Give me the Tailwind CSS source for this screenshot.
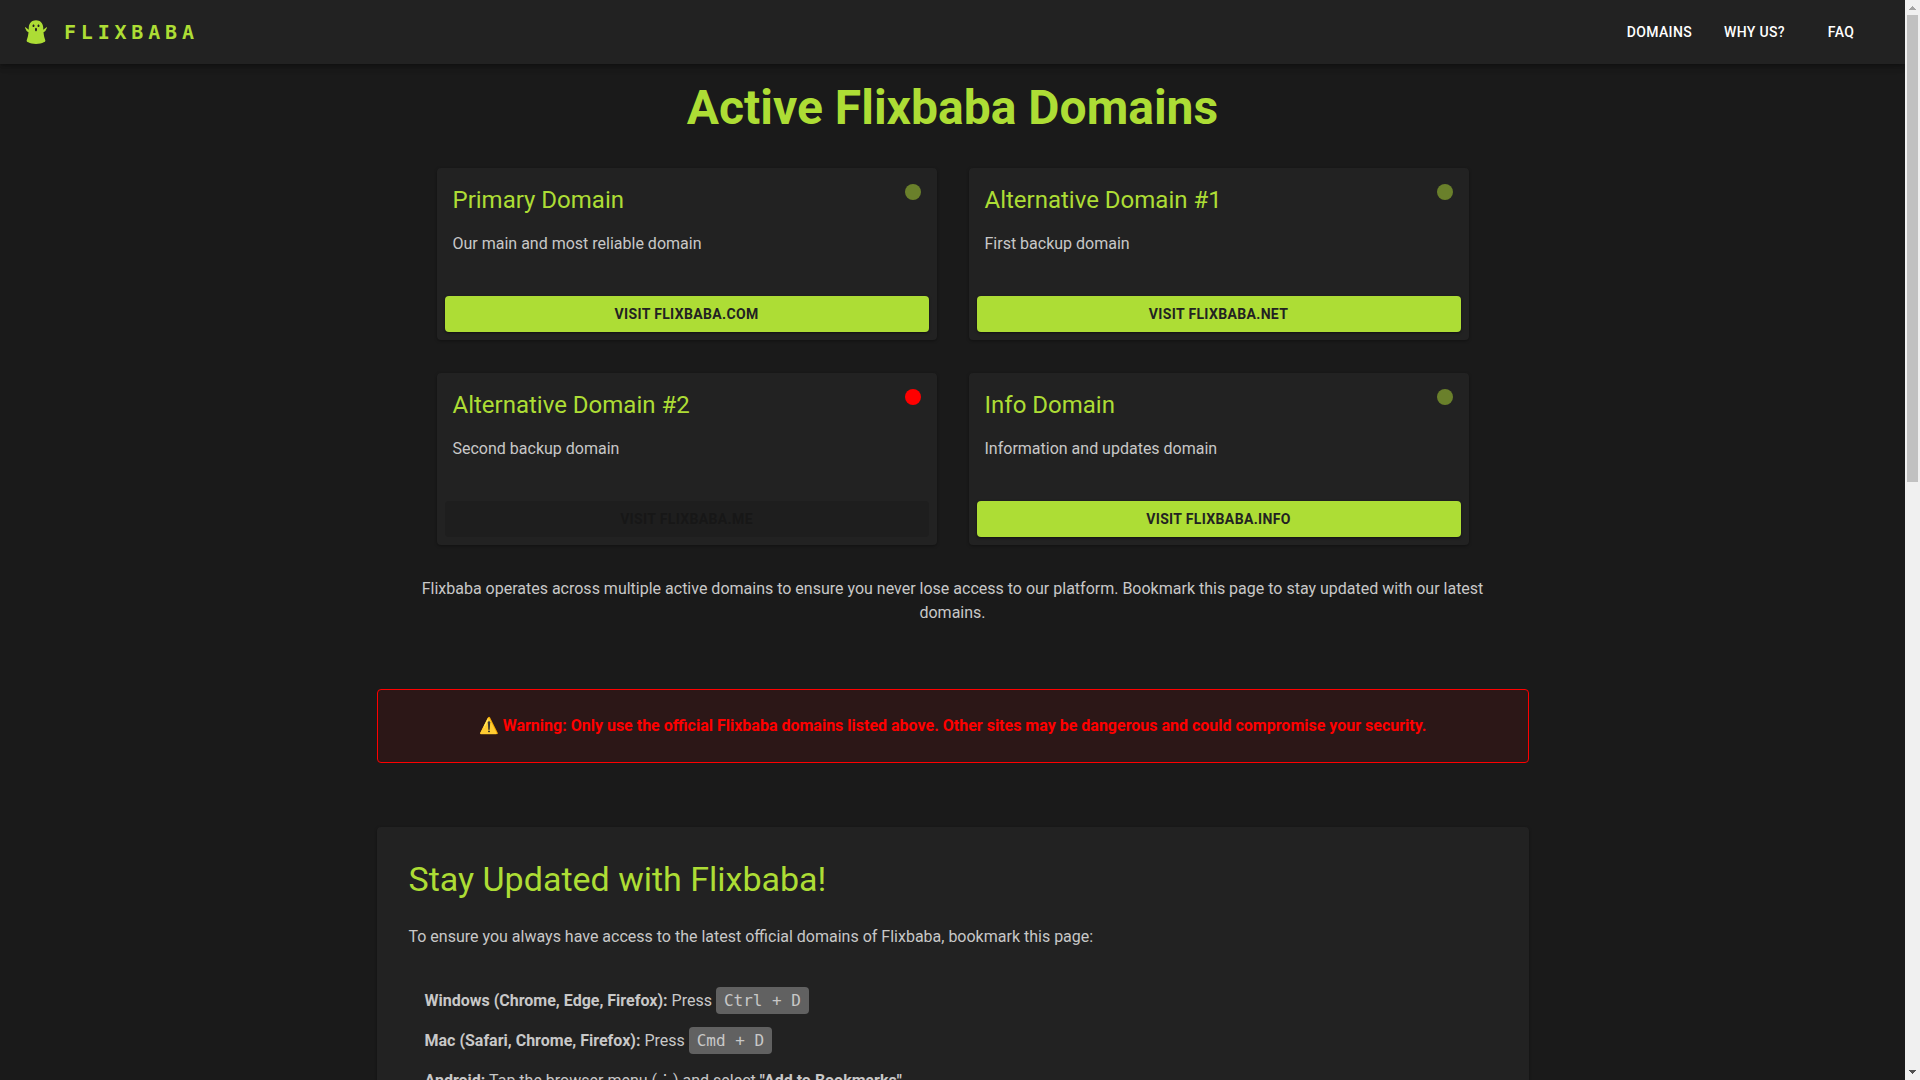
<!DOCTYPE html>
<html lang="en">
<head>
  <meta charset="UTF-8" />
  <meta name="viewport" content="width=device-width, initial-scale=1.0" />
  <title>Flixbaba - Active Domains</title>
  <script src="https://cdn.jsdelivr.net/npm/@tailwindcss/browser@4"></script>
</head>
<body class="flex h-screen overflow-hidden bg-[#1a1a1a] font-['Roboto',sans-serif] text-base text-[#c8c8c8]">
  <div class="flex h-screen min-w-0 flex-1 flex-col overflow-hidden">
    <!-- Top bar -->
    <header class="z-10 flex h-16 shrink-0 items-center justify-between bg-[#222222] px-6 shadow-[0_2px_4px_-1px_rgba(0,0,0,0.2),0_4px_5px_rgba(0,0,0,0.14),0_1px_10px_rgba(0,0,0,0.12)]">
      <a href="#" class="flex items-center gap-4 text-[#addd35]">
        <svg class="h-6 w-6" viewBox="0 0 24 24" fill="currentColor" aria-hidden="true">
          <path fill-rule="evenodd" d="M12 0.2C7.9 0.2 5 3 4.8 7.2L4.7 9.8L1.9 7.5C1.4 7.1 0.8 7.6 1.1 8.1L1.9 9.5C2.3 10.8 3.4 11.9 4.5 12.3C4.3 15 3.6 18 2.7 20.2C2.4 21 3 21.7 4.3 22.3C6 23.3 9 24 12 24C15 24 18 23.3 19.7 22.3C21 21.7 21.6 21 21.3 20.2C20.4 18 19.7 15 19.5 12.3C20.6 11.9 21.7 10.8 22.1 9.5L22.9 8.1C23.2 7.6 22.6 7.1 22.1 7.5L19.3 9.8L19.2 7.2C19 3 16.1 0.2 12 0.2ZM9.5 4.5C10.1 4.5 10.5 5.1 10.5 5.8C10.5 6.5 10.1 7.1 9.5 7.1C8.9 7.1 8.5 6.5 8.5 5.8C8.5 5.1 8.9 4.5 9.5 4.5ZM14.5 4.5C15.1 4.5 15.5 5.1 15.5 5.8C15.5 6.5 15.1 7.1 14.5 7.1C13.9 7.1 13.5 6.5 13.5 5.8C13.5 5.1 13.9 4.5 14.5 4.5ZM12 7.8C12.6 7.8 13 8.5 13 9.5C13 10.5 12.6 11.3 12 11.3C11.4 11.3 11 10.5 11 9.5C11 8.5 11.4 7.8 12 7.8Z" />
        </svg>
        <span class="font-['DejaVu_Sans_Mono',monospace] text-xl font-bold tracking-[0.3rem]">FLIXBABA</span>
      </a>
      <nav class="mr-2 flex gap-4 text-sm font-medium tracking-wide text-white">
        <a href="#domains" class="min-w-16 rounded px-2 py-1.5 text-center hover:bg-white/10">DOMAINS</a>
        <a href="#why" class="min-w-16 rounded px-2 py-1.5 text-center hover:bg-white/10">WHY US?</a>
        <a href="#faq" class="min-w-16 rounded px-2 py-1.5 text-center hover:bg-white/10">FAQ</a>
      </nav>
    </header>

    <main class="mx-auto w-full max-w-6xl pt-4">
      <!-- Domains -->
      <section id="domains">
        <h1 class="mb-8 text-center text-5xl/[56px] font-bold text-[#addd35]">Active Flixbaba Domains</h1>
        <div class="grid grid-cols-2 gap-x-8 gap-y-[33px] px-[60px]">
          <article class="rounded bg-[#222222] shadow-[0_1px_3px_rgba(0,0,0,0.35)]">
            <div class="flex items-start justify-between px-4 pt-4">
              <h2 class="mb-4 text-2xl text-[#addd35]">Primary Domain</h2>
              <span class="h-4 w-4 rounded-full bg-[#6a802b]"></span>
            </div>
            <p class="px-4 pb-8">Our main and most reliable domain</p>
            <div class="p-2">
              <button class="h-9 w-full rounded bg-[#addd35] text-sm font-bold tracking-wide text-[#222222] shadow-sm shadow-black/40">VISIT FLIXBABA.COM</button>
            </div>
          </article>
          <article class="rounded bg-[#222222] shadow-[0_1px_3px_rgba(0,0,0,0.35)]">
            <div class="flex items-start justify-between px-4 pt-4">
              <h2 class="mb-4 text-2xl text-[#addd35]">Alternative Domain #1</h2>
              <span class="h-4 w-4 rounded-full bg-[#6a802b]"></span>
            </div>
            <p class="px-4 pb-8">First backup domain</p>
            <div class="p-2">
              <button class="h-9 w-full rounded bg-[#addd35] text-sm font-bold tracking-wide text-[#222222] shadow-sm shadow-black/40">VISIT FLIXBABA.NET</button>
            </div>
          </article>
          <article class="rounded bg-[#222222] shadow-[0_1px_3px_rgba(0,0,0,0.35)]">
            <div class="flex items-start justify-between px-4 pt-4">
              <h2 class="mb-4 text-2xl text-[#addd35]">Alternative Domain #2</h2>
              <span class="h-4 w-4 rounded-full bg-[#ff0000]"></span>
            </div>
            <p class="px-4 pb-8">Second backup domain</p>
            <div class="p-2">
              <button disabled class="h-9 w-full rounded bg-[#1e1e1e] text-sm font-bold tracking-wide text-[#171717]">VISIT FLIXBABA.ME</button>
            </div>
          </article>
          <article class="rounded bg-[#222222] shadow-[0_1px_3px_rgba(0,0,0,0.35)]">
            <div class="flex items-start justify-between px-4 pt-4">
              <h2 class="mb-4 text-2xl text-[#addd35]">Info Domain</h2>
              <span class="h-4 w-4 rounded-full bg-[#6a802b]"></span>
            </div>
            <p class="px-4 pb-8">Information and updates domain</p>
            <div class="p-2">
              <button class="h-9 w-full rounded bg-[#addd35] text-sm font-bold tracking-wide text-[#222222] shadow-sm shadow-black/40">VISIT FLIXBABA.INFO</button>
            </div>
          </article>
        </div>
        <p class="mt-8 px-6 text-center">Flixbaba operates across multiple active domains to ensure you never lose access to our platform. Bookmark this page to stay updated with our latest domains.</p>
      </section>

      <!-- Warning -->
      <section class="mt-16 rounded border border-[#ff0000] bg-[#2c1717] px-6 py-6 text-center font-bold text-[#ff0000]">
        <p>⚠️ Warning: Only use the official Flixbaba domains listed above. Other sites may be dangerous and could compromise your security.</p>
      </section>

      <!-- Bookmark help -->
      <section class="mt-16 rounded bg-[#222222] p-8 shadow-[0_1px_3px_rgba(0,0,0,0.35)]">
        <h2 class="mb-[26px] text-[34px]/[40px] text-[#addd35]">Stay Updated with Flixbaba!</h2>
        <p class="mb-6">To ensure you always have access to the latest official domains of Flixbaba, bookmark this page:</p>
        <ul class="px-4 py-2">
          <li class="py-2"><strong>Windows (Chrome, Edge, Firefox):</strong> Press <kbd class="rounded bg-[#616161] px-2 py-1 font-['DejaVu_Sans_Mono',monospace]">Ctrl + D</kbd></li>
          <li class="py-2"><strong>Mac (Safari, Chrome, Firefox):</strong> Press <kbd class="rounded bg-[#616161] px-2 py-1 font-['DejaVu_Sans_Mono',monospace]">Cmd + D</kbd></li>
          <li class="py-2"><strong>Android:</strong> Tap the browser menu (⋮) and select <strong>"Add to Bookmarks"</strong></li>
        </ul>
      </section>
    </main>
  </div>

  <!-- Scrollbar -->
  <div class="flex h-screen w-[15px] shrink-0 flex-col items-center bg-[#f0f0f0]" aria-hidden="true">
    <svg class="h-[15px] w-[15px] shrink-0" viewBox="0 0 15 15" fill="#a3a3a3"><path d="M7 6h1v1h1v1h1v1h1v1H4V9h1V8h1V7h1z" /></svg>
    <div class="h-[467px] w-[11px] bg-[#c1c1c1]"></div>
    <svg class="mt-auto h-[15px] w-[15px] shrink-0" viewBox="0 0 15 15" fill="#505050"><path d="M4 5h7v1h-1v1H9v1H8v1H7V8H6V7H5V6H4z" /></svg>
  </div>
</body>
</html>
